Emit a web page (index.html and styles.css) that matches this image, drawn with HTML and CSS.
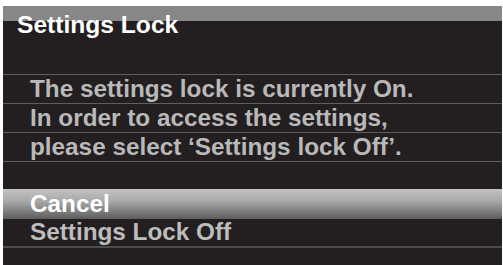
FILE: index.html
```html
<!DOCTYPE html>
<html>
<head>
<meta charset="utf-8">
<link rel="stylesheet" href="styles.css">
</head>
<body>
<div class="panel">
  <div class="title">Settings Lock</div>
  <div class="message">
    <div class="row">The settings lock is currently On.</div>
    <div class="row">In order to access the settings,</div>
    <div class="row">please select ‘Settings lock Off’.</div>
    <div class="row empty"></div>
  </div>
  <ul class="menu">
    <li class="item selected">Cancel</li>
    <li class="item">Settings Lock Off</li>
  </ul>
</div>
</body>
</html>
```
FILE: styles.css
```css
html, body {
  margin: 0;
  padding: 0;
  background: #ffffff;
}
body {
  height: 265px;
  overflow: hidden;
  font-family: "Liberation Sans", Arial, sans-serif;
  font-weight: bold;
  font-size: 24.3px;
}
.panel {
  margin: 6px 1px 0 3px;
  height: 259px;
  background: #231f20;
  display: flex;
  flex-direction: column;
}
.title {
  height: 64px;
  padding: 4px 0 0 14px;
  font-size: 24.6px;
  line-height: 29px;
  color: #ffffff;
  background: linear-gradient(#878787 0, #878787 15px, #231f20 15px);
}
.row {
  border-top: 1px solid #5e5e5e;
  height: 28px;
  line-height: 28px;
  padding-left: 27px;
  color: #b9b9b9;
}
.row.empty {
  height: 27px;
}
.menu {
  list-style: none;
  margin: 0;
  padding: 0;
  border-bottom: 2px solid #4c4c4c;
}
.item {
  height: 27px;
  line-height: 25px;
  padding-left: 27px;
  color: #bdbdbd;
}
.item.selected {
  height: 30px;
  line-height: 30px;
  color: #ffffff;
  background: linear-gradient(#c3c3c3 0, #a9a9a9 40%, #5d5d5d 100%);
}
```
